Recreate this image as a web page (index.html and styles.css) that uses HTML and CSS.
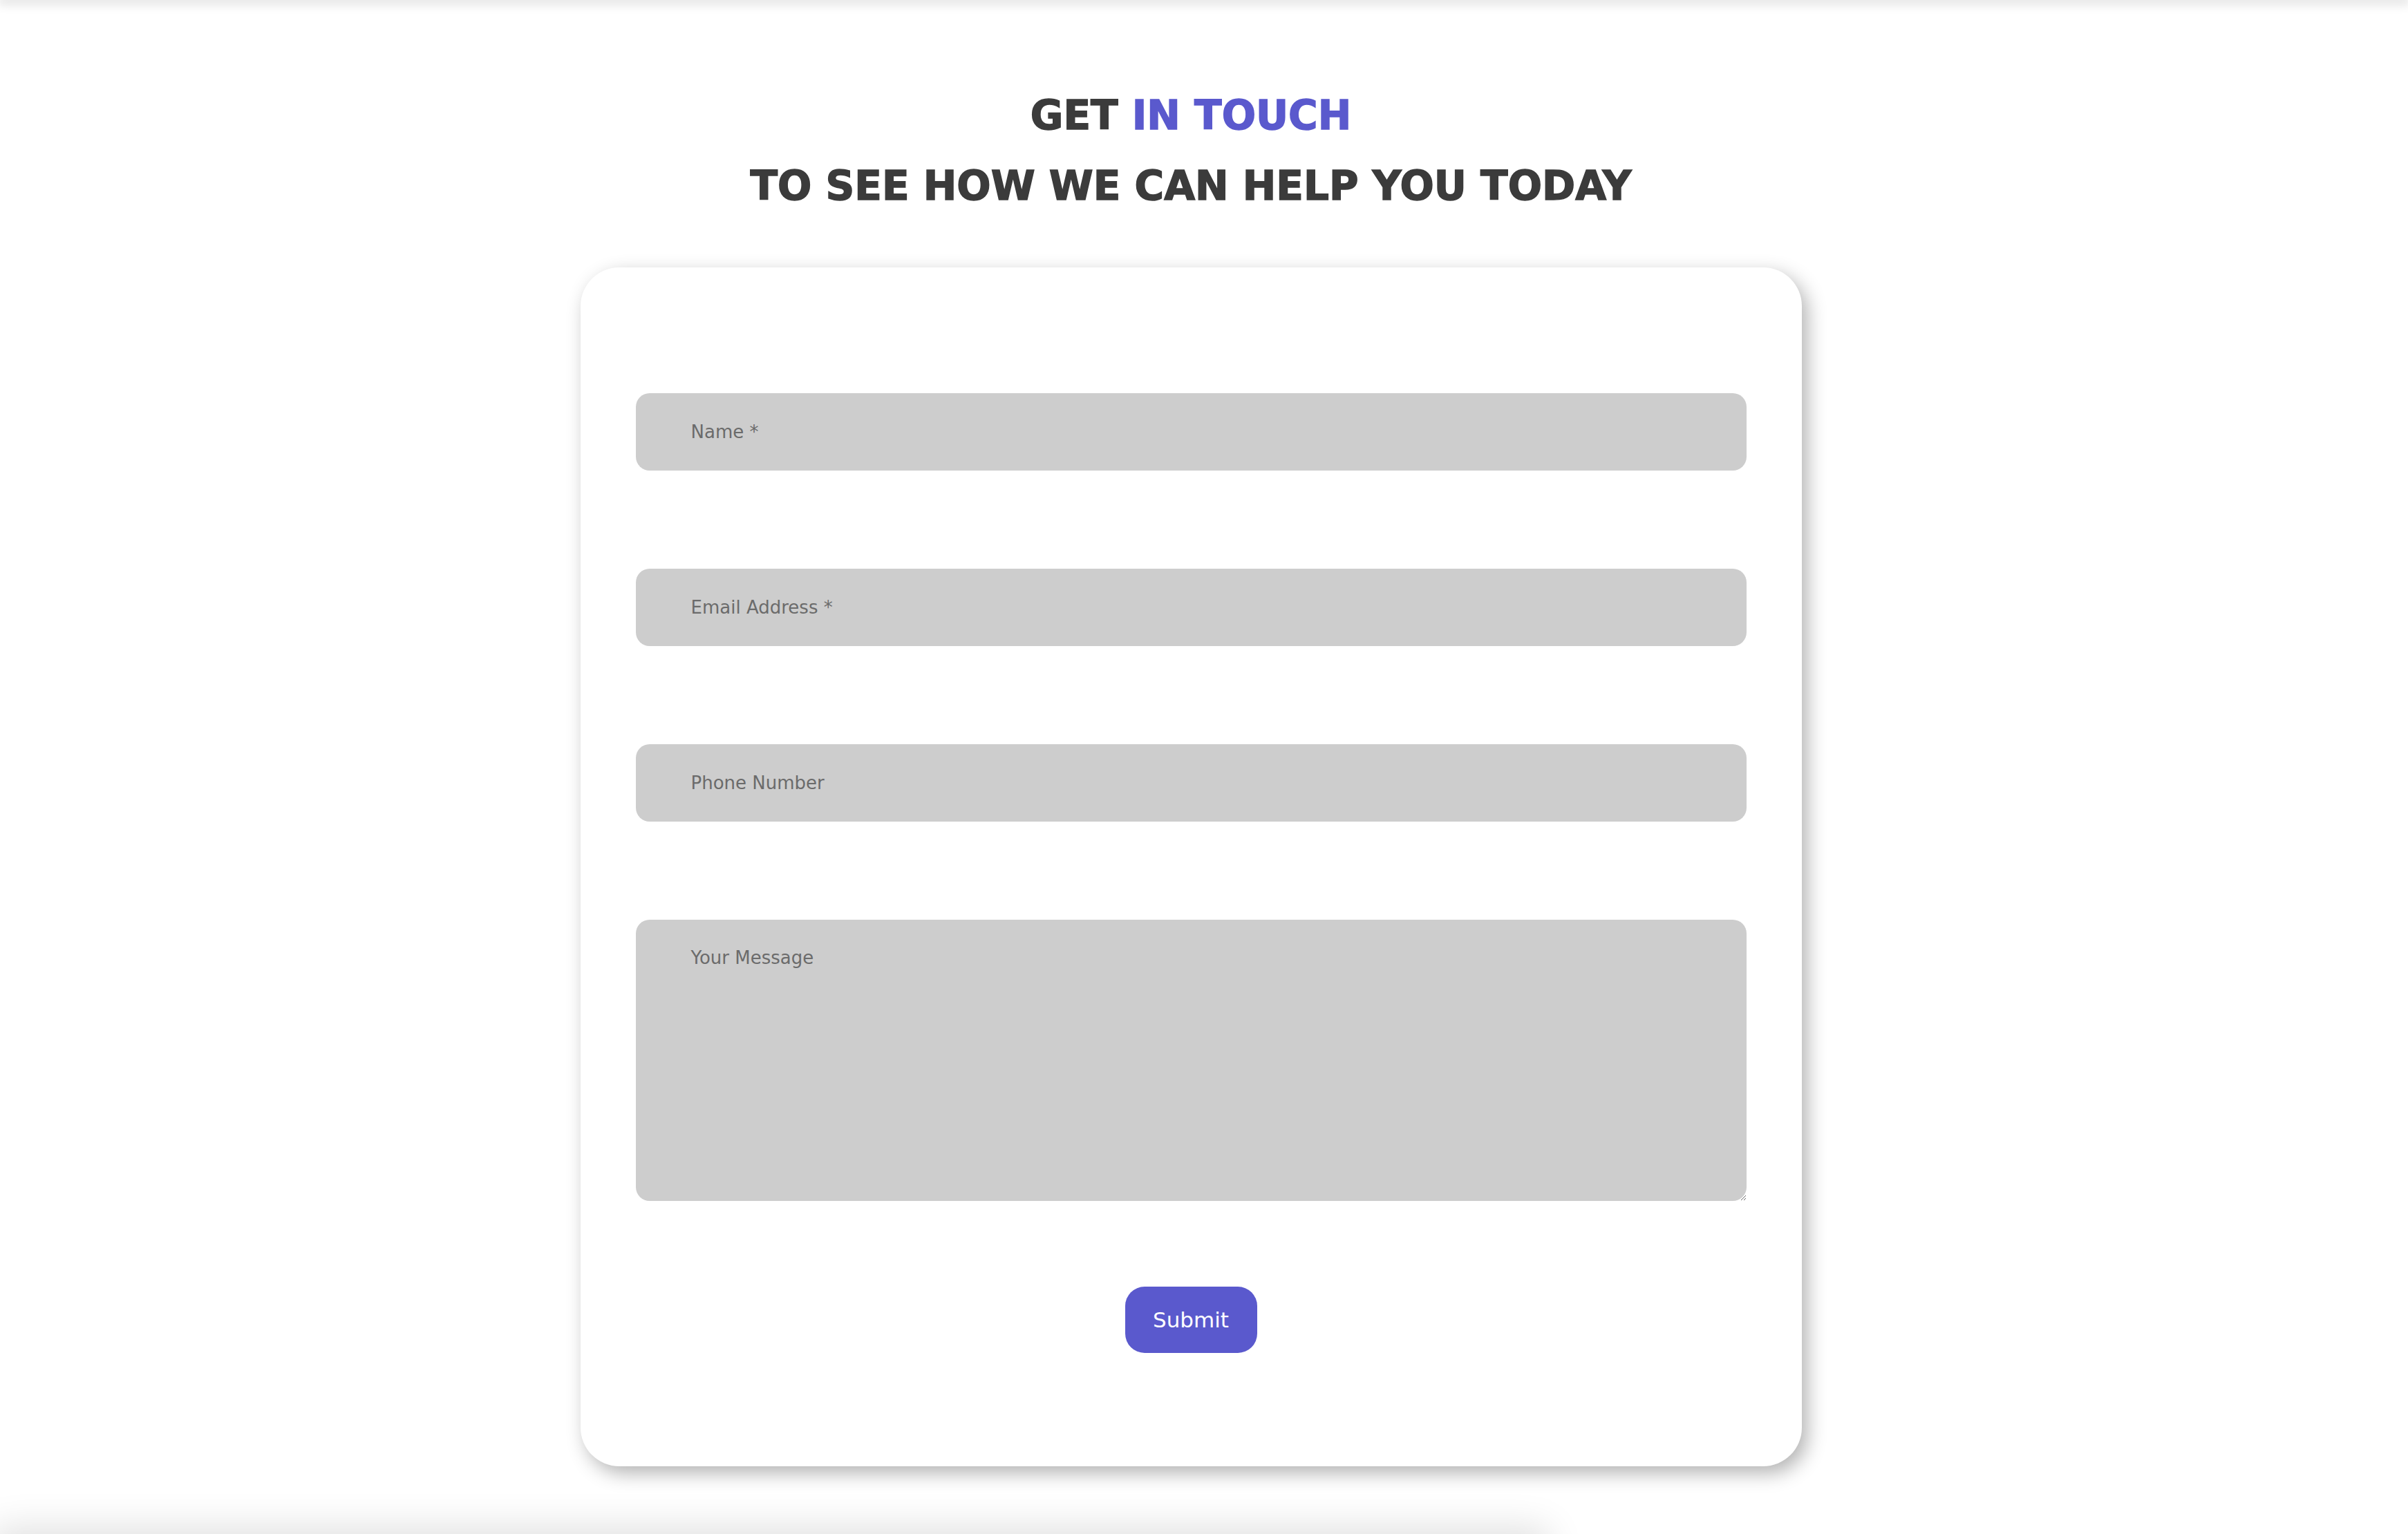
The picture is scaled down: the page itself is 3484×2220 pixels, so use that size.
FILE: index.html
```html
<!DOCTYPE html>
<html lang="en">
<head>
    <meta charset="UTF-8">
    <meta name="viewport" content="width=device-width, initial-scale=1.0">
    <title>Contact Us</title>
    <link rel="stylesheet" href="styles.css">
</head>
<body>
    <div class="top-bar"></div>

    <main class="page">
        <h1 class="contact-title">
            <span class="line">GET <span class="accent">IN TOUCH</span></span>
            <span class="line">TO SEE HOW WE CAN HELP YOU TODAY</span>
        </h1>

        <div class="contact-card">
            <form class="contact-form" onsubmit="return false;">
                <input type="text" class="field" placeholder="Name *">
                <input type="email" class="field" placeholder="Email Address *">
                <input type="tel" class="field" placeholder="Phone Number">
                <textarea class="field message" placeholder="Your Message"></textarea>
                <button type="submit" class="submit-btn">Submit</button>
            </form>
        </div>
    </main>

    <div class="next-section"></div>
</body>
</html>
```

FILE: styles.css
```css
body {
    margin: 0;
    background: #ffffff;
    font-family: "DejaVu Sans", "Noto Sans", sans-serif;
    color: #3b3b3b;
    overflow: hidden;
}

.top-bar {
    height: 0;
    box-shadow: 0 0 16px 3px rgba(0, 0, 0, 0.25);
}

.page {
    padding: 116px 38px 0 0;
    display: flex;
    flex-direction: column;
    align-items: center;
}

.contact-title {
    margin: 0;
    text-align: center;
    font-size: 58px;
    font-weight: 800;
    color: #3b3b3b;
    -webkit-text-stroke: 1.5px currentColor;
}

.contact-title .line {
    display: block;
    line-height: 102px;
}

.contact-title .accent {
    color: #5a59cd;
}

.contact-card {
    margin-top: 67px;
    width: 1767px;
    box-sizing: border-box;
    padding: 182px 80px 164px;
    background: #ffffff;
    border-radius: 56px;
    box-shadow: 8px 10px 28px rgba(0, 0, 0, 0.3);
}

.contact-form {
    display: flex;
    flex-direction: column;
    gap: 142px;
}

.field {
    display: block;
    width: 100%;
    height: 112px;
    box-sizing: border-box;
    padding: 0 80px;
    border: none;
    border-radius: 20px;
    background: #cdcdcd;
    font-family: inherit;
    font-size: 26px;
    color: #333;
    outline: none;
}

.field::placeholder {
    color: #6b6b6b;
}

.field.message {
    height: 407px;
    padding-top: 40px;
    padding-bottom: 40px;
}

.submit-btn {
    align-self: center;
    margin-top: -18px;
    width: 191px;
    height: 96px;
    border: none;
    border-radius: 28px;
    background: #5a59cd;
    color: #ffffff;
    font-family: inherit;
    font-size: 31px;
    cursor: pointer;
}

.next-section {
    margin-top: 98px;
    width: 2230px;
    height: 200px;
    background: #ffffff;
    box-shadow: 0 0 50px 10px rgba(0, 0, 0, 0.12);
}
```
